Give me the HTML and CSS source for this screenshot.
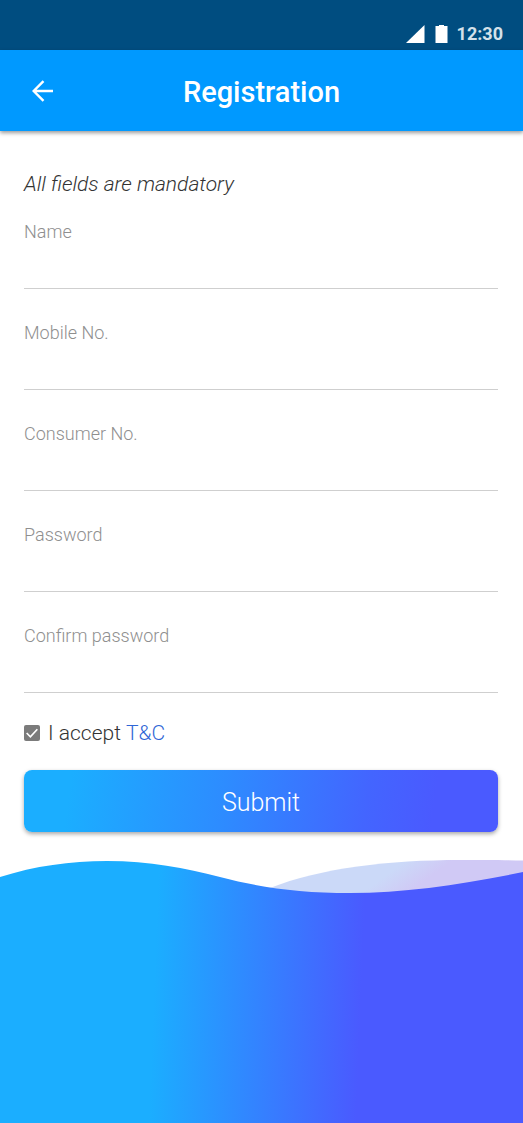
FILE: index.html
```html
<!DOCTYPE html>
<html lang="en">
<head>
<meta charset="utf-8">
<meta name="viewport" content="width=device-width, initial-scale=1">
<title>Registration</title>
<link rel="stylesheet" href="styles.css">
</head>
<body>
<div class="screen">
  <div class="status">
    <svg class="signal" width="19" height="18" viewBox="0 0 19 18" aria-hidden="true"><path d="M0 18 18.500 0V18z" fill="#fff"/></svg>
    <svg class="battery" width="13" height="18" viewBox="0 0 13 18" aria-hidden="true"><path d="M4 0h5v1h3.500v17H.5V1H4z" fill="#fff"/></svg>
    <time class="clock">12:30</time>
  </div>
  <header class="bar">
    <button class="back" type="button" aria-label="Back">
      <svg width="22" height="22" viewBox="0 0 22 22" aria-hidden="true"><path d="M22 11H3M12.500 1.200 2.700 11l9.800 9.800" fill="none" stroke="#fff" stroke-width="2.400"/></svg>
    </button>
    <h1 class="title">Registration</h1>
  </header>
  <form class="form">
    <p class="note">All fields are mandatory</p>
    <div class="field"><label for="name">Name</label><input id="name" type="text"></div>
    <div class="field"><label for="mobile">Mobile No.</label><input id="mobile" type="tel"></div>
    <div class="field"><label for="consumer">Consumer No.</label><input id="consumer" type="text"></div>
    <div class="field"><label for="password">Password</label><input id="password" type="password"></div>
    <div class="field"><label for="confirm">Confirm password</label><input id="confirm" type="password"></div>
    <div class="terms">
      <span class="tick">
        <input id="accept" type="checkbox" checked>
        <svg viewBox="0 0 15 15" aria-hidden="true"><path d="M2.500 7.500 6 11l6.500-7" fill="none" stroke="#fff" stroke-width="1.600"/></svg>
      </span>
      <label for="accept">I accept</label>
      <a href="#terms">T&amp;C</a>
    </div>
    <button class="submit" type="submit">Submit</button>
  </form>
  <svg class="wave" viewBox="0 860 523 263" preserveAspectRatio="none" aria-hidden="true">
    <defs>
      <linearGradient id="deep" gradientUnits="userSpaceOnUse" x1="154" y1="990" x2="361" y2="998">
        <stop offset="0" stop-color="#1baeff"/><stop offset="1" stop-color="#4a5aff"/>
      </linearGradient>
      <linearGradient id="pale" gradientUnits="userSpaceOnUse" x1="403" y1="863" x2="419" y2="885">
        <stop offset="0" stop-color="#cbd9f8"/><stop offset="1" stop-color="#d0c9f5"/>
      </linearGradient>
    </defs>
    <path d="M270 888C320 868 390 860 460 860C485 860 505 860 523 860.500V900H270z" fill="url(#pale)"/>
    <path d="M0 877C35 866 70 861 107 861C150 861 185 868 220 877C262 888 300 893 350 893C405 893 465 884 523 872V1123H0z" fill="url(#deep)"/>
  </svg>
</div>
</body>
</html>
```

FILE: styles.css
```css
* { box-sizing: border-box; }

body {
  margin: 0;
  background: #fff;
  color: #333;
  font-family: Roboto, "Liberation Sans", sans-serif;
  font-weight: 300;
}

.screen {
  display: flex;
  flex-direction: column;
  min-height: 100vh;
}

.status {
  display: flex;
  justify-content: flex-end;
  align-items: center;
  height: 50px;
  padding: 18px 20px 0 0;
  background: #004d80;
}

.battery { margin: 0 9px 0 10px; }

.clock {
  color: #d4e1ea;
  font-size: 18px;
  font-weight: 700;
  line-height: 20px;
}

.bar {
  display: grid;
  grid-template-columns: 36px 1fr 36px;
  align-items: center;
  height: 81px;
  padding: 0 24px;
  background: #0099ff;
  box-shadow: 0 2px 4px rgba(0, 0, 0, 0.4);
}

.back {
  display: flex;
  justify-content: center;
  padding: 8px 0;
  border: 0;
  background: none;
}

.title {
  margin: 0;
  color: #fff;
  font-size: 29px;
  font-weight: 500;
  line-height: 38px;
  padding-top: 2px;
  text-align: center;
}

.form {
  display: flex;
  flex-direction: column;
  padding: 38px 25px 28px 24px;
}

.note {
  margin: 0 0 10px;
  font-size: 21px;
  font-style: italic;
  line-height: 30px;
}

.field {
  display: flex;
  flex-direction: column;
  height: 80px;
  margin-bottom: 21px;
}

.field label {
  color: #8f8f8f;
  font-size: 18px;
  line-height: 46px;
}

.field input {
  flex: 1;
  min-height: 0;
  width: 100%;
  padding: 0;
  border: 0;
  border-bottom: 1px solid #cfcfcf;
  background: none;
  font: inherit;
  font-size: 18px;
  outline: 0;
}

.terms {
  display: flex;
  align-items: center;
  margin: 4px 0 22px;
  font-size: 21px;
  line-height: 30px;
}

.terms label { margin: 0 5px 0 8px; }

.terms a {
  color: #2f66d6;
  text-decoration: none;
}

.tick {
  display: grid;
  width: 16px;
  height: 16px;
}

.tick input,
.tick svg {
  grid-area: 1 / 1;
  width: 16px;
  height: 16px;
  margin: 0;
}

.tick input {
  appearance: none;
  border-radius: 2px;
  background: #7b7b7b;
}

.tick svg { pointer-events: none; }

.submit {
  height: 62px;
  padding: 2px 0 0;
  border: 0;
  border-radius: 8px;
  background: linear-gradient(98deg, #1baeff 10%, #2d8cff 42%, #4365ff 72%, #4a5aff 86%);
  box-shadow: 0 2px 4px rgba(0, 0, 0, 0.35);
  color: #fff;
  font: inherit;
  font-size: 25px;
}

.wave {
  display: block;
  flex: 1;
  width: 100%;
  min-height: 200px;
}
```
